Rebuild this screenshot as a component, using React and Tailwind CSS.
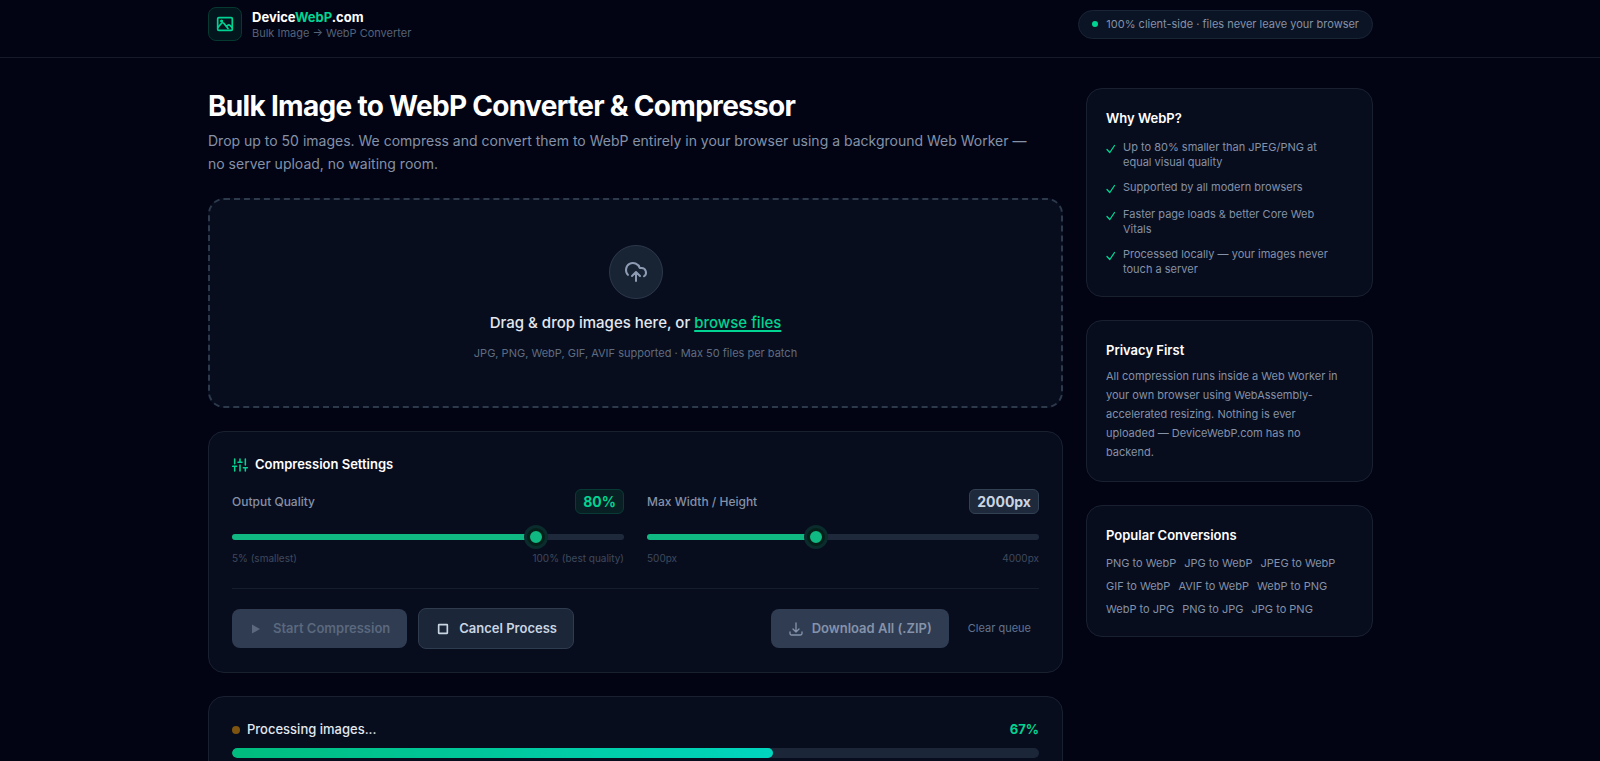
// src/App.jsx

import React, { useState } from 'react';

const reasons = [
  'Up to 80% smaller than JPEG/PNG at equal visual quality',
  'Supported by all modern browsers',
  'Faster page loads & better Core Web Vitals',
  'Processed locally — your images never touch a server',
];

const conversions = [
  'PNG to WebP',
  'JPG to WebP',
  'JPEG to WebP',
  'GIF to WebP',
  'AVIF to WebP',
  'WebP to PNG',
  'WebP to JPG',
  'PNG to JPG',
  'JPG to PNG',
];

const Icon = ({ className, strokeWidth = 2, children }) => (
  <svg
    className={className}
    viewBox="0 0 24 24"
    fill="none"
    stroke="currentColor"
    strokeWidth={strokeWidth}
    strokeLinecap="round"
    strokeLinejoin="round"
    aria-hidden="true"
  >
    {children}
  </svg>
);

const Card = ({ className = '', children }) => (
  <section className={`rounded-2xl border border-[#192131] bg-[#080d1e] ${className}`}>{children}</section>
);

const SideCard = ({ title, children }) => (
  <Card className="px-[19px] pt-5 pb-[19px]">
    <h2 className="text-[13px] leading-[19px] font-semibold">{title}</h2>
    {children}
  </Card>
);

function RangeField({ id, label, value, onChange, min, max, fill, unit, badgeClass, minLabel, maxLabel }) {
  // track is painted by hand so the filled part can be coloured
  const background = `linear-gradient(to right, #10b981 ${fill}%, #1e293b ${fill}%)`;

  return (
    <div>
      <div className="flex items-center justify-between">
        <label htmlFor={id} className="text-xs font-medium text-[#8491a7]">{label}</label>
        <output htmlFor={id} className={`rounded-md border px-[7px] text-sm leading-[23px] font-bold ${badgeClass}`}>
          {value}{unit}
        </output>
      </div>
      <input
        id={id}
        type="range"
        min={min}
        max={max}
        value={value}
        onChange={(e) => onChange(Number(e.target.value))}
        style={{ background }}
        className="mt-5 block h-1.5 w-full cursor-pointer appearance-none rounded-full [&::-webkit-slider-thumb]:h-[18px] [&::-webkit-slider-thumb]:w-[18px] [&::-webkit-slider-thumb]:appearance-none [&::-webkit-slider-thumb]:rounded-full [&::-webkit-slider-thumb]:border-[3px] [&::-webkit-slider-thumb]:border-[#052019] [&::-webkit-slider-thumb]:bg-[#10b981] [&::-webkit-slider-thumb]:shadow-[0_0_0_3px_#0b2c2d]"
      />
      <div className="mt-[11px] flex justify-between text-[10px] leading-[14px] text-[#3f495b]">
        <span>{minLabel}</span>
        <span>{maxLabel}</span>
      </div>
    </div>
  );
}

export default function App() {
  const [quality, setQuality] = useState(80);
  const [maxSize, setMaxSize] = useState(2000);
  const progress = 67;

  return (
    <div className="h-screen overflow-hidden bg-[#020414] font-['Inter','Liberation_Sans',sans-serif] text-white">
      <header className="border-b border-[#151b29] pt-[7px] pr-[19px] pb-4">
        <div className="mx-auto flex max-w-[1165px] items-center justify-between">
          <div className="flex items-center gap-2.5">
            <div className="flex h-[34px] w-[34px] items-center justify-center rounded-lg border border-[#06392f] bg-[#03151d]">
              <Icon className="h-[18px] w-[18px] text-[#00d492]" strokeWidth={2.3}>
                <rect x="2.25" y="3.5" width="19.5" height="17" rx="1.5" />
                <circle cx="7.5" cy="8" r="1" />
                <path d="M2.500 16.500l4.900-5.500a2 2 0 013 0L16 18M14 15.500l1.600-1.700a2 2 0 013 0l3 3" />
              </Icon>
            </div>
            <div>
              <div className="text-[13px] leading-[18px] font-bold">
                Device<span className="text-[#00d492]">WebP</span>.com
              </div>
              <div className="text-[11px] leading-[15px] text-[#556277]">Bulk Image → WebP Converter</div>
            </div>
          </div>
          <div className="flex items-center gap-2 rounded-full border border-[#192434] bg-[#0b1424] px-[13px] text-[11px] leading-[27px] text-[#8491a7]">
            <span className="h-1.5 w-1.5 rounded-full bg-[#00d492]" />
            100% client-side · files never leave your browser
          </div>
        </div>
      </header>

      <div className="pt-[30px] pr-[19px]">
        <div className="mx-auto grid max-w-[1165px] grid-cols-[1fr_287px] items-start gap-[23px]">
          <main>
            <h1 className="text-[28px] leading-[36px] font-bold tracking-tight">Bulk Image to WebP Converter &amp; Compressor</h1>
            <p className="mt-[5px] pr-6 text-sm leading-[23px] text-[#8491a7]">
              Drop up to 50 images. We compress and convert them to WebP entirely in your browser using a background Web Worker — no server upload, no waiting room.
            </p>

            <div className="mt-[23px] flex flex-col items-center rounded-2xl border-2 border-dashed border-[#2c3a4c] bg-[#080d1e] py-[45px]">
              <div className="flex h-[54px] w-[54px] items-center justify-center rounded-full border border-[#2c394b] bg-[#182334]">
                <Icon className="h-6 w-6 text-[#8e9cb3]">
                  <path d="M4 14.900A7 7 0 1 1 15.710 8h1.790a4.500 4.500 0 0 1 2.500 8.240" />
                  <path d="M12 12v9M8 16l4-4 4 4" />
                </Icon>
              </div>
              <p className="mt-3 text-[15px] leading-[23px] font-medium text-[#e2e8f0]">
                Drag &amp; drop images here, or{' '}
                <button type="button" className="text-[#00d492] underline decoration-2 underline-offset-2">browse files</button>
              </p>
              <p className="mt-[11px] text-[11px] leading-4 text-[#5f6c80]">JPG, PNG, WebP, GIF, AVIF supported · Max 50 files per batch</p>
            </div>

            <Card className="mt-[23px] p-[23px]">
              <h2 className="flex items-center gap-[7px] text-[13px] leading-[19px] font-semibold">
                <Icon className="h-4 w-4 text-[#00d492]" strokeWidth={2.3}>
                  <path d="M4 21v-7M4 10V3M12 21v-9M12 8V3M20 21v-5M20 12V3M1 14h6M9 8h6M17 16h6" />
                </Icon>
                Compression Settings
              </h2>
              <div className="mt-[15px] grid grid-cols-2 gap-[23px]">
                <RangeField
                  id="quality"
                  label="Output Quality"
                  value={quality}
                  onChange={setQuality}
                  min={5}
                  max={100}
                  fill={quality}
                  unit="%"
                  badgeClass="border-[#083b35] bg-[#082024] text-[#00d492]"
                  minLabel="5% (smallest)"
                  maxLabel="100% (best quality)"
                />
                <RangeField
                  id="max-size"
                  label="Max Width / Height"
                  value={maxSize}
                  onChange={setMaxSize}
                  min={500}
                  max={4000}
                  fill={((maxSize - 500) / 3500) * 100}
                  unit="px"
                  badgeClass="border-[#334155] bg-[#1e293b] text-[#cad5e2]"
                  minLabel="500px"
                  maxLabel="4000px"
                />
              </div>
              <div className="mt-[23px] flex items-center border-t border-[#151e2e] pt-[19px]">
                <button type="button" disabled className="flex h-[39px] items-center gap-2 rounded-lg bg-[#2f3c52] px-[17px] text-[13px] font-semibold text-[#5b687d]">
                  <svg className="h-4 w-4" viewBox="0 0 16 16" fill="currentColor" aria-hidden="true">
                    <path d="M3 3.500v9L11 8z" />
                  </svg>
                  Start Compression
                </button>
                <button type="button" className="ml-[11px] flex h-[41px] items-center gap-2 rounded-lg border border-[#2f3c4f] bg-[#1b2638] px-4 text-[13px] font-semibold text-[#cad5e2]">
                  <Icon className="h-4 w-4" strokeWidth={2.5}>
                    <rect x="5.5" y="5.5" width="13" height="13" rx="0.5" />
                  </Icon>
                  Cancel Process
                </button>
                <button type="button" disabled className="ml-auto flex h-[39px] items-center gap-2 rounded-lg bg-[#2f3c52] px-[17px] text-[13px] font-semibold text-[#8593aa]">
                  <Icon className="h-4 w-4">
                    <path d="M3 16.500v2.250A2.250 2.250 0 005.250 21h13.500A2.250 2.250 0 0021 18.750V16.500M16.500 12L12 16.500 7.500 12M12 16.500V3" />
                  </Icon>
                  Download All (.ZIP)
                </button>
                <button type="button" className="ml-[11px] px-2 text-[11px] text-[#62748e]">Clear queue</button>
              </div>
            </Card>

            <Card className="mt-[23px] p-[23px]">
              <div className="flex items-center gap-[7px] text-[13px] leading-[19px]">
                <span className="h-2 w-2 rounded-full bg-[#7d5510]" />
                <span className="font-medium text-[#e2e8f0]">Processing images...</span>
                <span className="ml-auto font-bold text-[#00d492]">{progress}%</span>
              </div>
              <div className="mt-[9px] h-2.5 overflow-hidden rounded-full bg-[#1b2638]">
                <div
                  className="h-full rounded-full bg-linear-to-r from-[#00bc7d] to-[#00d5be]"
                  style={{ width: `${progress}%` }}
                />
              </div>
            </Card>
          </main>

          <aside className="space-y-[23px]">
            <SideCard title="Why WebP?">
              <ul className="mt-3 space-y-2.5 pr-3 text-[11px] leading-[15px] text-[#8491a7]">
                {reasons.map((reason) => (
                  <li key={reason} className="flex items-start gap-[7px]">
                    <svg className="mt-1 h-[13px] w-2.5 shrink-0 text-[#00d492]" viewBox="0 0 10 13" fill="none" stroke="currentColor" strokeWidth="1.3" aria-hidden="true">
                      <path d="M1 5.500L3.800 8.500 8.500 1.500" strokeLinecap="round" strokeLinejoin="round" />
                    </svg>
                    {reason}
                  </li>
                ))}
              </ul>
            </SideCard>

            <SideCard title="Privacy First">
              <p className="mt-[7px] pr-3 text-[11px] leading-[19px] text-[#8491a7]">
                All compression runs inside a Web Worker in your own browser using WebAssembly-accelerated resizing. Nothing is ever uploaded — DeviceWebP.com has no backend.
              </p>
            </SideCard>

            <SideCard title="Popular Conversions">
              <div className="mt-[11px] flex flex-wrap gap-2 text-[11px] leading-[15px] text-[#8491a7]">
                {conversions.map((name) => (
                  <a key={name} href={`#${name.toLowerCase().replaceAll(' ', '-')}`}>{name}</a>
                ))}
              </div>
            </SideCard>
          </aside>
        </div>
      </div>
    </div>
  );
}
